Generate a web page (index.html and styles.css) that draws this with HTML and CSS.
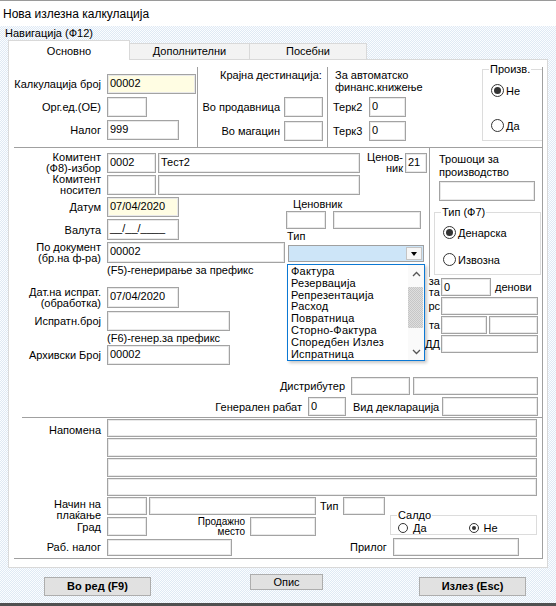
FILE: index.html
```html
<!DOCTYPE html>
<html lang="mk">
<head>
<meta charset="utf-8">
<title>Нова излезна калкулација</title>
<link rel="stylesheet" href="styles.css">
</head>
<body>
<div class="win">
  <div class="titlebar">Нова излезна калкулација</div>
  <div class="client">
    <div class="nav">Навигација (Ф12)</div>
    <div class="tabs">
      <div class="tab active">Основно</div>
      <div class="tab t2">Дополнителни</div>
      <div class="tab t3">Посебни</div>
    </div>
    <div class="panel">
      <div class="frame">
        <div class="sec-top">
          <div class="colA">
            <div class="rowA"><span class="lbl lblA">Калкулација број</span><span class="in yel w89">00002</span></div>
            <div class="rowA"><span class="lbl lblA">Орг.ед.(ОЕ)</span><span class="in w40"></span></div>
            <div class="rowA"><span class="lbl lblA">Налог</span><span class="in w72">999</span></div>
          </div>
          <div class="colB">
            <div class="colB-title">Крајна дестинација:</div>
            <div class="rowB"><span class="lbl lblB">Во продавница</span><span class="in w39"></span></div>
            <div class="rowB"><span class="lbl lblB">Во магацин</span><span class="in w39"></span></div>
          </div>
          <div class="colC">
            <div class="colC-title">За автоматско<br>финанс.книжење</div>
            <div class="rowB"><span class="lbl lblC">Терк2</span><span class="in w37">0</span></div>
            <div class="rowB"><span class="lbl lblC">Терк3</span><span class="in w37">0</span></div>
          </div>
          <div class="colD">
            <div class="grp grp-proizv">
              <span class="grp-title">Произв.</span>
              <div class="radio"><span class="rb on"></span>Не</div>
              <div class="radio rp2"><span class="rb"></span>Да</div>
            </div>
          </div>
        </div>

        <div class="sec-mid">
          <div class="mid-left">
            <div class="row h20">
              <span class="lbl lblA two">Комитент<br>(Ф8)-избор</span>
              <span class="in w49">0002</span>
              <span class="in w202 ml2">Тест2</span>
              <span class="lbl two lblCen">Ценов-<br>ник</span>
              <span class="in w22 ml2">21</span>
            </div>
            <div class="row h20 mt2">
              <span class="lbl lblA two">Комитент<br>носител</span>
              <span class="in w49"></span>
              <span class="in w202 ml2"></span>
            </div>
            <div class="block3">
              <div class="b3-left">
                <div class="row h20"><span class="lbl lblA">Датум</span><span class="in yel w72">07/04/2020</span></div>
                <div class="row h21 mt2"><span class="lbl lblA">Валута</span><span class="in w72 h21">__/__/____</span></div>
              </div>
              <div class="b3-right">
                <div class="cen-lbl">Ценовник</div>
                <div class="row"><span class="in w40 h18"></span><span class="in w88 h18 ml7"></span></div>
                <div class="tip-lbl">Тип</div>
              </div>
            </div>
            <div class="row h21">
              <span class="lbl lblA two">По документ<br>(бр.на ф-ра)</span>
              <span class="in w178 h21">00002</span>
              <div class="combo">
                <span class="combo-btn"><span class="tri"></span></span>
                <div class="ddlist">
                  <ul class="dditems">
                    <li>Фактура</li>
                    <li>Резервација</li>
                    <li>Репрезентација</li>
                    <li>Расход</li>
                    <li>Повратница</li>
                    <li>Сторно-Фактура</li>
                    <li>Споредбен Излез</li>
                    <li>Испратница</li>
                  </ul>
                  <div class="sb">
                    <svg class="chev up" width="9" height="6" viewBox="0 0 9 6"><polyline points="1,5 4.5,1.5 8,5" fill="none" stroke="#555" stroke-width="1.3"/></svg>
                    <div class="thumb"></div>
                    <svg class="chev down" width="9" height="6" viewBox="0 0 9 6"><polyline points="1,1 4.5,4.5 8,1" fill="none" stroke="#555" stroke-width="1.3"/></svg>
                  </div>
                </div>
              </div>
            </div>
            <div class="hint">(F5)-генерирање за префикс</div>
            <div class="row h21 mt11">
              <span class="lbl lblA two">Дат.на испрат.<br>(обработка)</span>
              <span class="in w72 h21">07/04/2020</span>
            </div>
            <div class="row h20 mt3">
              <span class="lbl lblA">Испратн.број</span>
              <span class="in w123"></span>
            </div>
            <div class="hint mt2">(F6)-генер.за префикс</div>
            <div class="row h20 mt1">
              <span class="lbl lblA">Архивски Број</span>
              <span class="in w123">00002</span>
            </div>
          </div>

          <div class="mid-right">
            <div class="cost-box">
              <div class="cost-lbl">Трошоци за<br>производство</div>
              <span class="in w96 cost-in"></span>
              <div class="grp grp-tip">
                <span class="grp-title">Тип (Ф7)</span>
                <div class="radio"><span class="rb on"></span>Денарска</div>
                <div class="radio rt2"><span class="rb"></span>Извозна</div>
              </div>
            </div>
            <div class="rrow"><span class="rlbl two-r"><span>за<br>та</span></span><span class="in w50 h18">0</span><span class="lbl days">денови</span></div>
            <div class="rrow"><span class="rlbl"><span>рс</span></span><span class="in w97 h18"></span></div>
            <div class="rrow"><span class="rlbl"><span>та</span></span><span class="in w46 h18"></span><span class="in w49 h18 ml2"></span></div>
            <div class="rrow"><span class="rlbl"><span>ДД</span></span><span class="in w97 h18"></span></div>
          </div>
        </div>

        <div class="sec-low">
          <div class="row h18">
            <span class="lbl lblDist">Дистрибутер</span>
            <span class="in w59 h18"></span>
            <span class="in w125 h18 ml3"></span>
          </div>
          <div class="row h19 mt2">
            <span class="lbl lblRab">Генерален рабат</span>
            <span class="in w38 h19">0</span>
            <span class="lbl lblVid">Вид декларација</span>
            <span class="in w96 h19"></span>
          </div>
        </div>
        <div class="sep"></div>

        <div class="sec-nap">
          <span class="lbl lblA nap-lbl">Напомена</span>
          <div class="nap-col">
            <span class="in w430 h18"></span>
            <span class="in w430 h19 mt1"></span>
            <span class="in w430 h19 mt1"></span>
            <span class="in w430 h18 mt1"></span>
          </div>
        </div>

        <div class="sec-bot">
          <div class="row h18 mt1">
            <span class="lbl lblA two top1">Начин на<br>плаќање</span>
            <span class="in w40 h18"></span>
            <span class="in w167 h18 ml2"></span>
            <span class="lbl lblTip">Тип</span>
            <span class="in w42 h18"></span>
          </div>
          <div class="row h19 mt2">
            <span class="lbl lblA">Град</span>
            <span class="in w40 h19"></span>
            <span class="lbl lblProd">Продажно<br>место</span>
            <span class="in w66 h19"></span>
            <div class="grp grp-saldo">
              <span class="grp-title">Салдо</span>
              <div class="saldo-row">
                <div class="radio sm"><span class="rb"></span>Да</div>
                <div class="radio sm rs2"><span class="rb on"></span>Не</div>
              </div>
            </div>
          </div>
          <div class="row h18 mt2">
            <span class="lbl lblA">Раб. налог</span>
            <span class="in w125 h17"></span>
            <span class="lbl lblPril">Прилог</span>
            <span class="in w126 h18"></span>
          </div>
        </div>
      </div>
    </div>
    <div class="btns">
      <div class="btn bold bw">Во ред (F9)</div>
      <div class="btn opis">Опис</div>
      <div class="btn bold bw izl">Излез (Esc)</div>
    </div>
  </div>
</div>
</body>
</html>
```

FILE: styles.css
```css
* { box-sizing: border-box; }
html, body { margin: 0; padding: 0; }
body {
  width: 556px;
  height: 606px;
  overflow: hidden;
  font-family: "Liberation Sans", Arial, sans-serif;
  font-size: 11px;
  color: #000;
  background: #fff;
}
.win { width: 556px; height: 606px; display: flex; flex-direction: column; }
.titlebar {
  height: 26px;
  flex: none;
  background: #fff;
  border-top: 1px solid #9a9a9a;
  padding: 6px 0 0 3px;
  font-size: 12px;
  line-height: 14px;
}
.client {
  flex: 1;
  background-color: #fbfdff;
  background-image: repeating-conic-gradient(#dfe9f4 0 25%, #fbfdff 0 50%);
  background-size: 2px 2px;
  border-bottom: 3px solid #505050;
}
.nav { height: 14px; padding: 1px 0 0 5px; line-height: 12px; }
.tabs { display: flex; align-items: flex-start; height: 19px; margin-left: 8px; }
.tab {
  height: 16px;
  margin-top: 3px;
  border: 1px solid #d9d9d9;
  border-bottom: none;
  background: #f3f3f3;
  text-align: center;
  line-height: 15px;
}
.tab.active {
  position: relative;
  z-index: 1;
  width: 122px;
  height: 20px;
  margin-top: 0;
  background: #fff;
  padding-top: 3px;
  line-height: 14px;
}
.t2 { width: 120px; border-left: none; }
.t3 { width: 117px; border-left: none; }

.panel {
  margin-left: 8px;
  width: 540px;
  height: 509px;
  border: 1px solid #d9d9d9;
  background: #fff;
  padding: 7px 0 0 5px;
}
.frame {
  width: 529px;
  height: 492px;
  border-right: 1px solid #a0a0a0;
  border-bottom: 1px solid #a0a0a0;
}

/* generic */
.row { display: flex; align-items: center; }
.lbl { flex: none; white-space: nowrap; line-height: 12px; }
.two { line-height: 11px; }
.lblA { width: 87px; text-align: right; margin-right: 6px; }
.in {
  flex: none;
  display: block;
  height: 20px;
  border: 1px solid #a3a3a3;
  box-shadow: inset 0 0 0 1px #e9e9e9;
  background: #fff;
  padding: 1px 0 0 2px;
  line-height: 14px;
  white-space: nowrap;
  overflow: hidden;
}
.yel { background: #fffde3; }
.h17 { height: 17px; } .h18 { height: 18px; } .h19 { height: 19px; } .h20 { height: 20px; } .h21 { height: 21px; }
.mt1 { margin-top: 1px; } .mt2 { margin-top: 2px; } .mt3 { margin-top: 3px; } .mt11 { margin-top: 11px; }
.ml2 { margin-left: 2px; } .ml3 { margin-left: 3px; } .ml7 { margin-left: 7px; }
.w22 { width: 22px; } .w37 { width: 37px; } .w38 { width: 38px; } .w39 { width: 39px; } .w40 { width: 40px; }
.w42 { width: 42px; } .w46 { width: 46px; } .w49 { width: 49px; } .w50 { width: 50px; } .w59 { width: 59px; }
.w66 { width: 66px; } .w72 { width: 72px; } .w88 { width: 88px; } .w89 { width: 89px; } .w96 { width: 96px; }
.w97 { width: 97px; } .w123 { width: 123px; } .w125 { width: 125px; } .w126 { width: 126px; } .w167 { width: 167px; }
.w178 { width: 178px; } .w202 { width: 202px; } .w430 { width: 430px; }

/* group boxes & radios */
.grp { position: relative; border: 1px solid #dcdcdc; }
.grp-title {
  position: absolute;
  top: -7px;
  left: 6px;
  padding: 0 1px;
  background: #fff;
  line-height: 12px;
}
.radio { display: flex; align-items: center; height: 13px; line-height: 12px; }
.rb {
  position: relative;
  flex: none;
  width: 13px;
  height: 13px;
  margin-right: 2px;
  border: 1px solid #333;
  border-radius: 50%;
  background: #fff;
}
.rb.on::after {
  content: "";
  position: absolute;
  left: 2px;
  top: 2px;
  width: 7px;
  height: 7px;
  border-radius: 50%;
  background: #333;
}

/* top section */
.sec-top { display: flex; height: 81px; border-bottom: 1px solid #a0a0a0; }
.colA { width: 184px; border-right: 1px solid #a0a0a0; padding-top: 7px; }
.rowA { display: flex; align-items: center; height: 20px; margin-bottom: 3px; }
.colB { width: 130px; border-right: 1px solid #a0a0a0; padding-top: 2px; }
.colB-title { height: 28px; padding-left: 22px; line-height: 12px; }
.rowB { display: flex; align-items: center; height: 20px; margin-bottom: 4px; }
.lblB { width: 82px; text-align: right; margin-right: 4px; }
.colC { width: 154px; padding-top: 2px; }
.colC-title { height: 28px; padding-left: 7px; line-height: 12px; }
.lblC { width: 41px; padding-left: 5px; }
.colD { width: 60px; }
.grp-proizv { margin-top: 2px; width: 60px; height: 72px; border-right: none; padding: 14px 0 0 8px; }
.rp2 { margin-top: 22px; }

/* middle */
.sec-mid { display: flex; height: 222px; }
.mid-left { width: 415px; padding-top: 5px; }
.lblCen { width: 43px; text-align: right; }
.block3 { display: flex; height: 45px; margin-top: 2px; }
.b3-left { width: 165px; }
.b3-right { width: 138px; margin-left: 107px; }
.cen-lbl { height: 14px; padding: 1px 0 0 7px; line-height: 12px; }
.tip-lbl { height: 13px; margin-top: 1px; padding-left: 1px; line-height: 13px; }
.hint { height: 12px; margin-top: 1px; padding-left: 93px; line-height: 12px; }

.combo {
  position: relative;
  flex: none;
  align-self: flex-start;
  width: 136px;
  height: 17px;
  margin: 3px 0 0 3px;
  border: 1px solid #a0a0a0;
  background: #cde5f8;
}
.combo-btn {
  position: absolute;
  right: 1px;
  top: 1px;
  width: 16px;
  height: 13px;
  border: 1px solid #c4c4c4;
  background: #f6f6f6;
}
.tri {
  position: absolute;
  left: 4px;
  top: 4px;
  width: 0;
  height: 0;
  border-left: 3.5px solid transparent;
  border-right: 3.5px solid transparent;
  border-top: 4px solid #000;
}
.ddlist {
  position: absolute;
  z-index: 5;
  left: -2px;
  top: 18px;
  width: 138px;
  height: 97px;
  border: 1px solid #0b78d4;
  background: #fff;
  box-shadow: 2px 2px 3px rgba(0, 0, 0, 0.22);
}
.dditems { list-style: none; margin: 0; padding: 1px 0 0 3px; }
.dditems li { height: 11.8px; line-height: 11.8px; white-space: nowrap; letter-spacing: 0.2px; }
.sb {
  position: absolute;
  right: 0;
  top: 0;
  width: 16px;
  height: 95px;
  background: #fafafa;
}
.chev { position: absolute; left: 4px; display: block; }
.chev.up { top: 6px; }
.chev.down { bottom: 5px; }
.thumb {
  position: absolute;
  left: 0;
  top: 22px;
  width: 15px;
  height: 41px;
  background-color: #d2d2d2;
  background-image: repeating-conic-gradient(#c6c6c6 0 25%, #dedede 0 50%);
  background-size: 2px 2px;
}

.mid-right { width: 113px; }
.cost-box { height: 129px; border-left: 1px solid #a0a0a0; padding: 5px 0 0 9px; }
.cost-lbl { line-height: 13px; }
.cost-in { margin-top: 2px; }
.grp-tip { width: 107px; height: 63px; margin: 11px 0 0 -5px; padding: 13px 0 0 8px; }
.rt2 { margin-top: 14px; }
.rrow { display: flex; align-items: center; height: 18px; margin-top: 1px; }
.rlbl {
  display: flex;
  justify-content: flex-end;
  flex: none;
  width: 11px;
  margin-right: 1px;
  white-space: nowrap;
  line-height: 12px;
}
.rlbl.two-r { line-height: 11px; }
.days { margin-left: 4px; }

/* lower */
.sec-low { height: 47px; padding-top: 7px; }
.lblDist { width: 331px; text-align: right; margin-right: 6px; }
.lblRab { width: 288px; text-align: right; margin-right: 6px; }
.lblVid { width: 89px; margin-left: 7px; }
.sep { height: 1px; margin-left: 8px; background: #a0a0a0; }

.sec-nap { display: flex; align-items: flex-start; margin-top: 1px; }
.nap-lbl { padding-top: 5px; }
.nap-col { display: flex; flex-direction: column; }

.top1 { align-self: flex-start; margin-top: 2px; }
.lblTip { width: 23px; margin-left: 4px; }
.lblProd { width: 98px; text-align: right; font-size: 10px; line-height: 10px; margin-right: 5px; }
.grp-saldo {
  flex: none;
  align-self: flex-start;
  width: 147px;
  height: 20px;
  margin: -2px 0 0 74px;
  padding: 6px 0 0 7px;
}
.saldo-row { display: flex; }
.radio.sm { height: 11px; }
.radio.sm .rb { width: 10px; height: 10px; margin-right: 5px; }
.radio.sm .rb.on::after { left: 2px; top: 2px; width: 4px; height: 4px; }
.rs2 { margin-left: 42px; }
.lblPril { width: 43px; margin-left: 118px; }

/* buttons */
.btns { display: flex; align-items: flex-start; padding: 6px 0 0 44px; }
.btn {
  flex: none;
  height: 19px;
  border: 1px solid #adadad;
  background: #e1e1e1;
  text-align: center;
  line-height: 17px;
}
.bold { font-weight: bold; }
.bw { width: 107px; margin-top: 3px; }
.opis { width: 73px; height: 16px; line-height: 14px; margin-left: 99px; }
.izl { margin-left: 96px; }
```
